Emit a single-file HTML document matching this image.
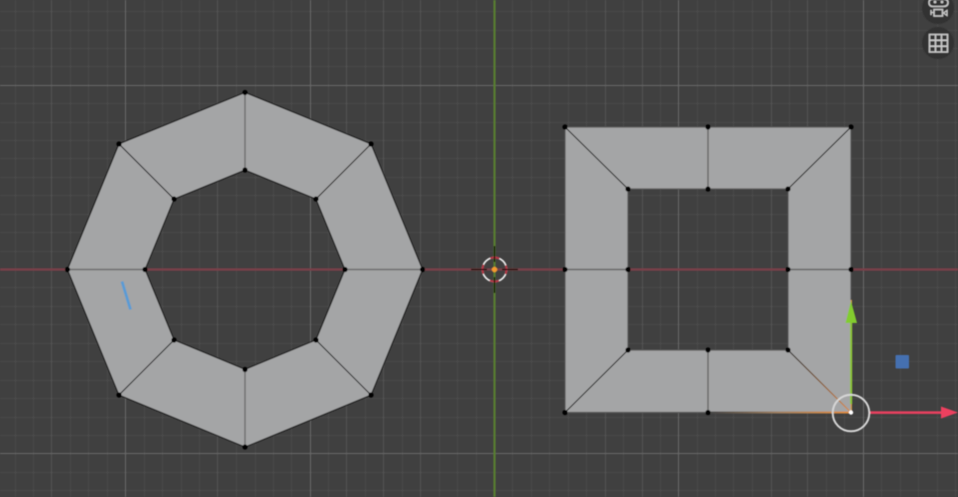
<!DOCTYPE html>
<html><head><meta charset="utf-8"><style>
html,body{margin:0;padding:0;background:#404040;width:958px;height:497px;overflow:hidden}
svg{display:block}
</style></head><body>
<svg width="958" height="497" viewBox="0 0 958 497" xmlns="http://www.w3.org/2000/svg">
<defs>
<linearGradient id="g1" gradientUnits="userSpaceOnUse" x1="708" y1="0" x2="851" y2="0"><stop offset="0" stop-color="#444"/><stop offset="0.5" stop-color="#a08060"/><stop offset="1" stop-color="#e08a3c"/></linearGradient>
<linearGradient id="g2" gradientUnits="userSpaceOnUse" x1="788" y1="350" x2="851" y2="412"><stop offset="0" stop-color="#222"/><stop offset="1" stop-color="#e08a3c"/></linearGradient>
<filter id="b" x="0" y="0" width="100%" height="100%"><feGaussianBlur stdDeviation="0.45"/></filter>
</defs>
<rect width="958" height="497" fill="#404040"/>
<g filter="url(#b)" fill="none" stroke-width="1" shape-rendering="crispEdges">
<path stroke="#4b4b4b" d="M15.5 0V497M33.5 0V497M70.5 0V497M88.5 0V497M107.5 0V497M144.5 0V497M162.5 0V497M181.5 0V497M199.5 0V497M236.5 0V497M255.5 0V497M273.5 0V497M291.5 0V497M328.5 0V497M365.5 0V497M402.5 0V497M439.5 0V497M457.5 0V497M476.5 0V497M512.5 0V497M531.5 0V497M549.5 0V497M568.5 0V497M586.5 0V497M623.5 0V497M660.5 0V497M697.5 0V497M715.5 0V497M733.5 0V497M752.5 0V497M789.5 0V497M826.5 0V497M844.5 0V497M881.5 0V497M900.5 0V497M918.5 0V497M937.5 0V497M955.5 0V497"/>
<path stroke="#4c4c4c" d="M0 11.5H958M0 30.5H958M0 48.5H958M0 66.5H958M0 103.5H958M0 122.5H958M0 140.5H958M0 158.5H958M0 177.5H958M0 195.5H958M0 214.5H958M0 232.5H958M0 251.5H958M0 287.5H958M0 306.5H958M0 324.5H958M0 343.5H958M0 361.5H958M0 380.5H958M0 398.5H958M0 417.5H958M0 435.5H958M0 472.5H958M0 490.5H958"/>
<path stroke="#555" d="M51.5 0V497M217.5 0V497M346.5 0V497M383.5 0V497M420.5 0V497M605.5 0V497M642.5 0V497M771.5 0V497M807.5 0V497"/>
<path stroke="#696969" d="M125.5 0V497M310.5 0V497M678.5 0V497M863.5 0V497M0 85.5H958M0 453.5H958"/>
</g>
<g filter="url(#b)">
<rect x="0" y="268.3" width="958" height="2.4" fill="#7a4148"/>
<rect x="493.4" y="0" width="2.2" height="497" fill="#587f33"/>

<path fill-rule="evenodd" fill="#a4a5a6" d="M245 92.5L371 144L422.5 269.5L371 395L245 447L119 395L67.5 269.5L119 144ZM245 170L174 199L145 269.5L174 340L245 369.5L316 340L345 269.5L316 199Z"/>
<path fill="none" stroke="#111" stroke-width="1" d="M245 92.5L371 144L422.5 269.5L371 395L245 447L119 395L67.5 269.5L119 144ZM245 170L174 199L145 269.5L174 340L245 369.5L316 340L345 269.5L316 199ZM371 144L316 199M371 395L316 340M119 395L174 340M119 144L174 199"/>
<path fill="none" stroke="#6c6c6c" stroke-width="1.4" d="M245 92.5V170M245 369.5V447M67.5 269.5H145M345 269.5H422.5"/>

<path fill-rule="evenodd" fill="#a4a5a6" d="M565 127H851V412.5H565ZM628 189V350H788V189Z"/>
<path fill="none" stroke="#555" stroke-width="1.2" d="M565 127H851V300M565 127V412.5H708M628 189H788V350H628Z"/>
<path fill="none" stroke="#111" stroke-width="1" d="M565 127L628 189M851 127L788 189M565 412.5L628 350"/>
<path fill="none" stroke="#666" stroke-width="1.4" d="M708 127V189M708 350V412.5M565 269.5H628M788 269.5H851"/>
<path fill="none" stroke="url(#g1)" stroke-width="2" d="M708 412.5H851"/>
<path fill="none" stroke="url(#g2)" stroke-width="1.2" d="M788 350L851 412.5"/>

<g fill="#000">
<circle cx="245" cy="92.5" r="2.6"/><circle cx="371" cy="144" r="2.6"/><circle cx="422.5" cy="269.5" r="2.6"/><circle cx="371" cy="395" r="2.6"/><circle cx="245" cy="447" r="2.6"/><circle cx="119" cy="395" r="2.6"/><circle cx="67.5" cy="269.5" r="2.6"/><circle cx="119" cy="144" r="2.6"/>
<circle cx="245" cy="170" r="2.6"/><circle cx="316" cy="199" r="2.6"/><circle cx="345" cy="269.5" r="2.6"/><circle cx="316" cy="340" r="2.6"/><circle cx="245" cy="369.5" r="2.6"/><circle cx="174" cy="340" r="2.6"/><circle cx="145" cy="269.5" r="2.6"/><circle cx="174" cy="199" r="2.6"/>
<circle cx="565" cy="127" r="2.6"/><circle cx="708" cy="127" r="2.6"/><circle cx="851" cy="127" r="2.6"/><circle cx="565" cy="269.5" r="2.6"/><circle cx="851" cy="269.5" r="2.6"/><circle cx="565" cy="412.5" r="2.6"/><circle cx="708" cy="412.5" r="2.6"/>
<circle cx="628" cy="189" r="2.6"/><circle cx="708" cy="189" r="2.6"/><circle cx="788" cy="189" r="2.6"/><circle cx="628" cy="269.5" r="2.6"/><circle cx="788" cy="269.5" r="2.6"/><circle cx="628" cy="350" r="2.6"/><circle cx="708" cy="350" r="2.6"/><circle cx="788" cy="350" r="2.6"/>
</g>

<path d="M122 281.5L130.5 309.5" stroke="#5a9bd4" stroke-width="2.8" fill="none"/>

<rect x="850.6" y="300" width="1.4" height="112" fill="#d09a4a"/>
<rect x="850" y="320" width="2.2" height="84" fill="#8cc63a"/>
<path d="M851 301L857 323H845.5Z" fill="#82cc2e"/>
<rect x="870" y="411.3" width="75" height="2.6" fill="#e8405f"/>
<path d="M941 406.5L958 412.5L941 418.5Z" fill="#ee3f5f"/>
<circle cx="851" cy="413" r="18.3" fill="none" stroke="#d6d6d6" stroke-width="2"/>
<circle cx="851" cy="412.5" r="2.2" fill="#fff"/>
<rect x="895.5" y="355" width="13.5" height="13.5" rx="1" fill="#4570b0"/>

<circle cx="494.5" cy="269.5" r="12" fill="none" stroke="#e8e8e8" stroke-width="1.8"/>
<circle cx="494.5" cy="269.5" r="12" fill="none" stroke="#b83040" stroke-width="1.9" stroke-dasharray="9.4 9.45" stroke-dashoffset="4.7"/>
<path d="M471 269.5H487M502 269.5H518M494.5 246V262M494.5 277V293" stroke="#000" stroke-width="1.3" fill="none"/>
<circle cx="494.5" cy="269.5" r="2.8" fill="#f29a2e"/>

<circle cx="938" cy="8" r="16" fill="#333"/>
<circle cx="938" cy="43" r="16" fill="#333"/>
<path d="M929.5 34.5H947.5V52H929.5ZM935.5 34.5V52M941.5 34.5V52M929.5 40.3H947.5M929.5 46.2H947.5" fill="none" stroke="#ccc" stroke-width="1.6"/>
<path d="M933 -1H943Q948 -1 948 2.5Q948 6.5 943 6.5H933Q929 6.5 929 2.5Q929 -1 933 -1Z" fill="none" stroke="#ccc" stroke-width="1.5"/>
<circle cx="935" cy="2" r="1.4" fill="#ccc"/><circle cx="942" cy="2" r="1.4" fill="#ccc"/>
<rect x="934" y="9.5" width="8.5" height="6.5" fill="none" stroke="#ccc" stroke-width="1.5"/>
<path d="M931 12.5H934M931 10V15" stroke="#ccc" stroke-width="1.2" fill="none"/>
<path d="M947 10.5L943.5 13L947 15.5Z" fill="none" stroke="#ccc" stroke-width="1.2"/>
</g>
</svg>
</body></html>
